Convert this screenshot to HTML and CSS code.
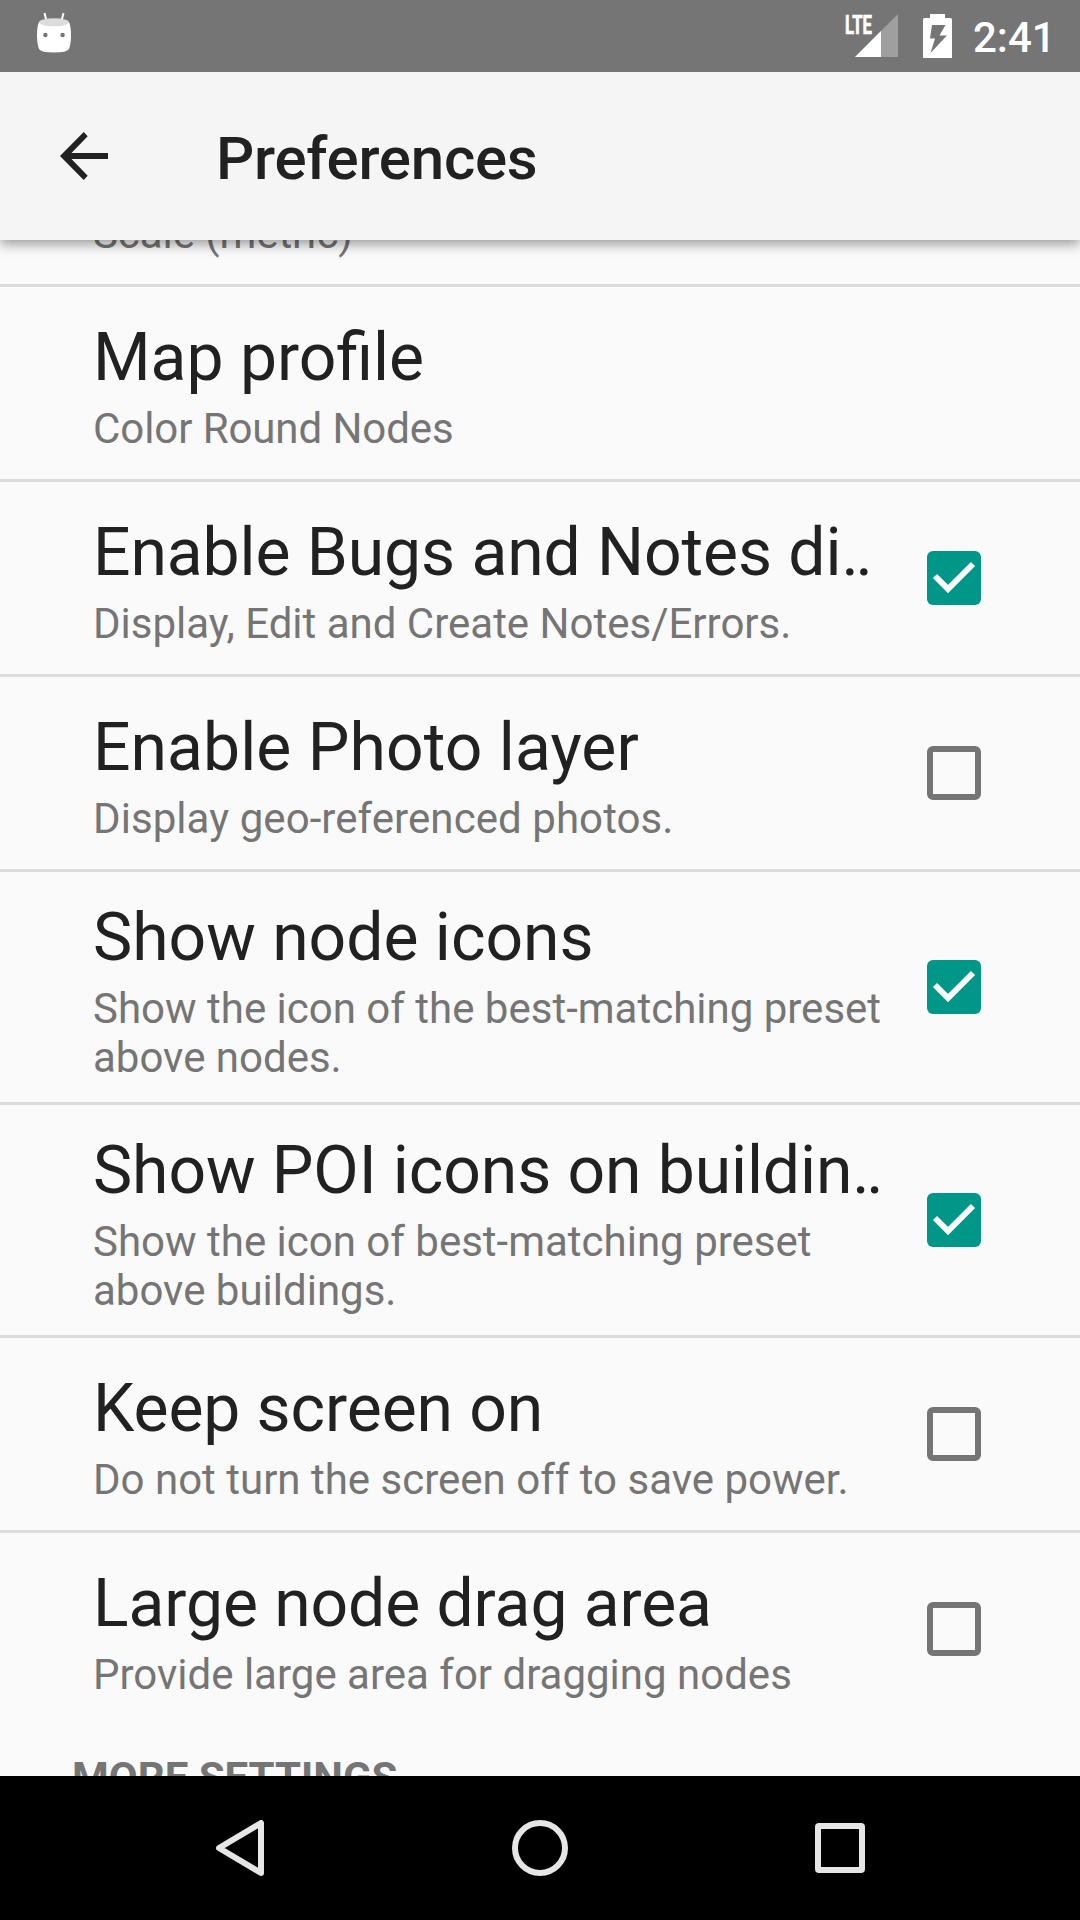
FILE: index.html
```html
<!DOCTYPE html>
<html lang="en">
<head>
<meta charset="utf-8">
<title>Preferences</title>
<link rel="stylesheet" href="styles.css">
</head>
<body>
<div class="screen">
  <header class="status">
    <svg class="droid" width="34" height="41" viewBox="0 0 34 41">
      <path d="M7.5 1 9.7 10M26.5 1 24.3 10" stroke="#fff" stroke-width="2"/>
      <path d="M2 10Q0 14 0 23T2 37Q4 40.500 17 40.500T32 37Q34 32 34 23T32 10Z" fill="#fff"/>
      <ellipse cx="17" cy="10.3" rx="15" ry="4" fill="#dcdcdc"/>
      <circle cx="8.4" cy="23" r="2.2" fill="#757575"/><circle cx="25.6" cy="23" r="2.2" fill="#757575"/>
    </svg>
    <div class="status-right">
      <svg class="signal" width="54" height="44" viewBox="0 0 54 44">
        <path d="M53 0V43H10Z" fill="#9f9f9f"/><path d="M36 17V43H10Z" fill="#fff"/>
        <text x="0" y="19.5" class="lte" textLength="27" lengthAdjust="spacingAndGlyphs">LTE</text>
      </svg>
      <svg class="battery" width="29" height="44" viewBox="0 0 29 44">
        <path fill="#fff" fill-rule="evenodd" d="M7 0H22V4H27.5Q29 4 29 5.500V44H0V5.500Q0 4 1.500 4H7ZM9 11 7 24.500H12L7.500 39 24 21.500H16.500L22.500 11Z"/>
      </svg>
      <span class="clock">2:41</span>
    </div>
  </header>
  <div class="appbar">
    <svg class="back" width="48" height="48" viewBox="0 0 48 48"><path d="M48 21V27H11.500L27.700 43.700 23.700 48 0 24 23.700 0 27.700 4.200 11.500 21Z" fill="#212121"/></svg>
    <h1 class="heading">Preferences</h1>
  </div>
  <main class="list">
    <div class="row partial"><p class="summary snug">Scale (metric)</p></div>
    <div class="row"><div class="text single"><h2 class="title">Map profile</h2><p class="summary snug">Color Round Nodes</p></div></div>
    <div class="row"><div class="text single"><h2 class="title snug">Enable Bugs and Notes di<span class="dots">..</span></h2><p class="summary">Display, Edit and Create Notes/Errors.</p></div>
      <svg class="box on" viewBox="0 0 54 54"><path d="M8 25 21 38 46 13"/></svg></div>
    <div class="row"><div class="text single"><h2 class="title loose">Enable Photo layer</h2><p class="summary loose">Display geo-referenced photos.</p></div><span class="box off"></span></div>
    <div class="row"><div class="text"><h2 class="title">Show node icons</h2><p class="summary">Show the icon of the best-matching preset<br>above nodes.</p></div>
      <svg class="box on" viewBox="0 0 54 54"><path d="M8 25 21 38 46 13"/></svg></div>
    <div class="row"><div class="text"><h2 class="title snug">Show POI icons on buildin<span class="dots">..</span></h2><p class="summary">Show the icon of best-matching preset<br>above buildings.</p></div>
      <svg class="box on" viewBox="0 0 54 54"><path d="M8 25 21 38 46 13"/></svg></div>
    <div class="row"><div class="text single"><h2 class="title snug">Keep screen on</h2><p class="summary">Do not turn the screen off to save power.</p></div><span class="box off"></span></div>
    <div class="row last"><div class="text single"><h2 class="title snug">Large node drag area</h2><p class="summary">Provide large area for dragging nodes</p></div><span class="box off"></span></div>
    <h3 class="category">MORE SETTINGS</h3>
  </main>
  <nav class="nav">
    <svg width="56" height="56" viewBox="0 0 56 56"><path d="M49 3V53L7 28Z"/></svg>
    <svg width="56" height="56" viewBox="0 0 56 56"><circle cx="28" cy="28" r="25"/></svg>
    <svg width="56" height="56" viewBox="0 0 56 56"><rect x="6" y="6" width="44" height="44" rx="1"/></svg>
  </nav>
</div>
</body>
</html>
```
FILE: styles.css
```css
* { box-sizing: border-box; margin: 0; padding: 0; }
body { background: #fafafa; font-family: Roboto, sans-serif; color: #212121; }
.screen { width: 1080px; height: 1920px; display: flex; flex-direction: column; overflow: hidden; }
svg { display: block; flex: none; }

.status { position: relative; z-index: 2; height: 72px; flex: none; background: #757575; display: flex; justify-content: space-between; padding: 12px 30px 0 37px; }
.status-right { display: flex; color: #fff; }
.signal { margin: 2px 24px 0 0; overflow: visible; }
.battery { margin: 2px 21px 0 0; }
.lte { font: 700 26px Roboto, sans-serif; fill: #fff; stroke: #fff; stroke-width: .7px; }
.clock { width: 77px; margin-top: 1px; font-size: 42px; line-height: 49px; font-weight: 500; white-space: nowrap; }

.appbar { height: 168px; flex: none; background: #f5f5f5; display: flex; align-items: center; padding: 0 60px; box-shadow: 0 4px 12px rgba(0,0,0,.4); position: relative; z-index: 1; }
.back { margin-top: -1px; }
.heading { margin: 5px 0 0 108px; font-size: 60px; line-height: 70px; font-weight: 500; letter-spacing: -.25px; }

.list { flex: 1; min-height: 0; overflow: hidden; }
.row { display: flex; align-items: center; justify-content: space-between; min-height: 195px; padding: 0 99px 0 93px; border-bottom: 3px solid #dcdcdc; }
.partial { min-height: 47px; height: 47px; align-items: flex-end; padding-bottom: 26px; }
.last { min-height: 192px; border-bottom: 0; }
.text { padding: 27px 0 20px; white-space: nowrap; }
.single { padding-bottom: 21px; }
.title { font-size: 66px; line-height: 77px; font-weight: 400; }
.summary { margin-top: 8px; font-size: 42px; line-height: 49px; color: #757575; }
.snug { letter-spacing: -.08px; }
.loose { letter-spacing: .07px; }
.dots { letter-spacing: -3.4px; }
.box { width: 54px; height: 54px; border-radius: 6px; flex: none; }
.on { background: #009688; }
.on path { fill: none; stroke: #fafafa; stroke-width: 6; }
.off { border: 6px solid #757575; }
.category { margin-top: 28px; padding-left: 72px; font-size: 42px; line-height: 49px; font-weight: 700; color: #757575; }

.nav { height: 144px; flex: none; background: #000; display: flex; justify-content: center; gap: 244px; align-items: center; }
.nav svg { fill: none; stroke: #e6e6e6; stroke-width: 6; stroke-linejoin: round; }
```
